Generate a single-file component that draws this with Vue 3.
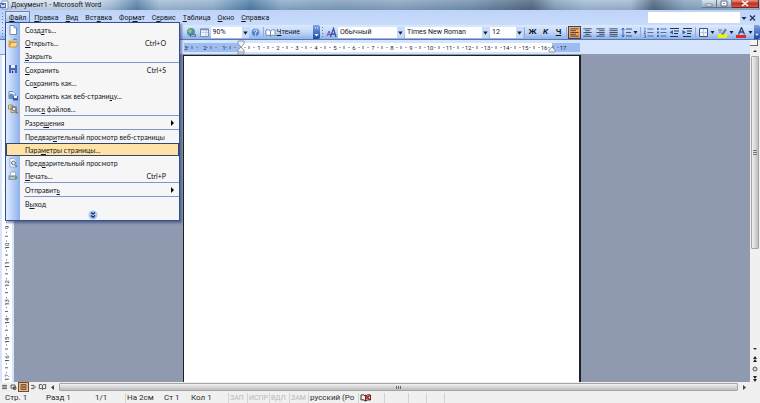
<script setup>
import { ref } from 'vue'

const menus = [
  ['', 'Ф', 'айл'], ['', 'П', 'равка'], ['', 'В', 'ид'], ['Вст', 'а', 'вка'], ['Фор', 'м', 'ат'],
  ['С', 'е', 'рвис'], ['', 'Т', 'аблица'], ['', 'О', 'кно'], ['', 'С', 'правка'],
]
const entries = [
  { t: ['Созд', 'а', 'ть...'], icon: 'new' },
  { t: ['', 'О', 'ткрыть...'], icon: 'open', key: 'Ctrl+O' },
  { t: ['', 'З', 'акрыть'] },
  { t: ['', 'С', 'охранить'], icon: 'save', key: 'Ctrl+S', line: true },
  { t: ['Со', 'х', 'ранить как...'] },
  { t: ['Сохранить как веб-страни', 'ц', 'у...'], icon: 'web' },
  { t: ['Поис', 'к', ' файлов...'], icon: 'find' },
  { t: ['Разре', 'ш', 'ения'], sub: true, line: true },
  { t: ['Предвар', 'и', 'тельный просмотр веб-страницы'], line: true },
  { t: ['Пара', 'м', 'етры страницы...'], active: true },
  { t: ['Пред', 'в', 'арительный просмотр'], icon: 'preview' },
  { t: ['', 'П', 'ечать...'], icon: 'print', key: 'Ctrl+P' },
  { t: ['Отправит', 'ь', ''], sub: true, line: true },
  { t: ['В', 'ы', 'ход'], line: true },
]
const aligns = [
  { name: 'По левому краю', d: 'M1 2h9M1 4h6M1 6h9M1 8h6M1 10h9' },
  { name: 'По центру', d: 'M1 2h9M3 4h5M1 6h9M3 8h5M1 10h9' },
  { name: 'По правому краю', d: 'M1 2h9M4 4h6M1 6h9M4 8h6M1 10h9' },
  { name: 'По ширине', d: 'M1 2h9M1 4h9M1 6h9M1 8h9M1 10h9' },
]
const views = [
  { name: 'Обычный', d: 'M2 3h6M2 5h6M2 7h6' },
  { name: 'Веб-документ', d: 'M2 2.500h5v4h-5zM5 5h3v3h-3z' },
  { name: 'Разметка страницы', d: 'M2 2h6v6h-6zM3 4h4M3 6h4', on: true },
  { name: 'Структура', d: 'M2 3h4M4 5h4M2 7h4' },
  { name: 'Чтение', d: 'M1 2h3l1 1 1-1h3v5h-3l-1 1-1-1h-3zM5 3v5' },
]
const hMarks = Array.from({ length: 21 }, (_, i) => i - 3)
const vMarks = Array.from({ length: 18 }, (_, i) => i)
const vAt = (n) => 3 + (n * 94) / 5
const zoom = ref('90%')
const style = ref('Обычный')
const font = ref('Times New Roman')
const size = ref('12')
const modes = ['ЗАП', 'ИСПР', 'ВДЛ', 'ЗАМ']
</script>

<template>
  <div class="window">
    <header class="title">
      <svg class="logo" viewBox="0 0 9 10"><path d="M2 1h6v8h-6z" fill="#fff" stroke="#7d94c4" /><path d="M0 3h6v5h-6z" fill="#4a6dbb" /><path d="M1 4l1 3 1-2 1 2 1-3" fill="none" stroke="#fff" stroke-width=".8" /></svg>
      <h1>Документ1 - Microsoft Word</h1>
      <div class="controls">
        <button aria-label="Свернуть"><svg viewBox="0 0 14 8"><path d="M4 4h6v2h-6z" fill="#fff" stroke="#5d6d82" stroke-width=".7" /></svg></button>
        <button aria-label="Развернуть"><svg viewBox="0 0 14 8"><path d="M4 1h6v5h-6z" fill="#fff" stroke="#5d6d82" /><path d="M6 3h2v1h-2z" fill="#7d8da5" /></svg></button>
        <button class="close" aria-label="Закрыть"><svg viewBox="0 0 14 8"><path d="M4 1l6 5M10 1l-6 5" stroke="#fff" stroke-width="1.600" /></svg></button>
      </div>
    </header>

    <nav class="menubar">
      <i class="grip"></i>
      <button v-for="(m, i) in menus" :key="i" :class="{ open: i === 0 }">{{ m[0] }}<u>{{ m[1] }}</u>{{ m[2] }}</button>
      <input class="question" aria-label="Введите вопрос" />
      <svg class="drop" viewBox="0 0 5 10"><path d="M0 4h5l-2.500 3z" fill="#1c2f5a" /></svg>
      <button class="shut" aria-label="Закрыть документ"><svg viewBox="0 0 8 8"><path d="M1.500 1.500l5 5M6.500 1.500l-5 5" stroke="#26365c" stroke-width="1.400" /></svg></button>

      <div class="popup" role="menu">
        <button v-for="(e, i) in entries" :key="i" role="menuitem" class="entry" :class="{ line: e.line, active: e.active }">
          <span class="pic">
            <svg v-if="e.icon" viewBox="0 0 10 10">
              <g v-if="e.icon === 'new'"><path d="M2 .5h4l2.500 2.500v6.500h-6.500z" fill="#fff" stroke="#7188ae" /><path d="M6 .5v2.500h2.500" fill="none" stroke="#7188ae" stroke-width=".8" /></g>
              <g v-if="e.icon === 'open'"><path d="M.5 9v-6.500h3l1 1h4v5.500z" fill="#e2a43a" /><path d="M1 9l2-4.500h7l-2 4.500z" fill="#ffd878" stroke="#b47b20" stroke-width=".6" /><path d="M5 2q2-2 4 0" fill="none" stroke="#5d719c" /></g>
              <g v-if="e.icon === 'save'"><path d="M1 1h8v8h-8z" fill="#4a63b0" /><path d="M3 1h4v3h-4z" fill="#e5ebf8" /><path d="M3 6h4v3h-4z" fill="#aab8df" /><path d="M4 7h1v2h-1z" fill="#26376f" /></g>
              <g v-if="e.icon === 'web'"><path d="M1 .5h4l2 2v5h-6z" fill="#fff" stroke="#7188ae" /><circle cx="3.500" cy="5" r="2.500" fill="#5894c8" /><path d="M5 5h5v4.500h-5z" fill="#3e57a5" /><path d="M6 5h3v2h-3z" fill="#fff" /></g>
              <g v-if="e.icon === 'find'"><path d="M.5 1h4v4h-4zM3 2.500h5.500v6h-5.500z" fill="#f3d68d" stroke="#8a7550" stroke-width=".7" /><circle cx="6" cy="5" r="2" fill="#dcebff" stroke="#58688e" /><path d="M7.500 7l2 2.500" stroke="#a3672a" stroke-width="1.300" /></g>
              <g v-if="e.icon === 'preview'"><path d="M2 .5h4l2 2v6.500h-6z" fill="#fff" stroke="#8ba0c2" stroke-width=".8" /><circle cx="5.500" cy="5" r="2" fill="#c5e2ee" stroke="#617e99" /><path d="M7 7l2 2" stroke="#617e99" stroke-width="1.300" /></g>
              <g v-if="e.icon === 'print'"><path d="M3 1h5l-1 4h-5z" fill="#fff" stroke="#7a8797" stroke-width=".6" /><path d="M.5 4.500h9v3l-2 1.500h-7z" fill="#8797a7" /><path d="M2 7h5" stroke="#e9eef3" /><path d="M7 6h2v2h-2z" fill="#55a055" /></g>
            </svg>
          </span>
          <span class="label">{{ e.t[0] }}<u>{{ e.t[1] }}</u>{{ e.t[2] }}</span>
          <kbd v-if="e.key">{{ e.key }}</kbd>
          <svg v-if="e.sub" class="more" viewBox="0 0 3 6"><path d="M0 0l3 3-3 3z" fill="#000" /></svg>
        </button>
        <button class="expand" aria-label="Развернуть меню"><svg viewBox="0 0 10 10"><circle cx="5" cy="5" r="4.500" fill="#a9c6f3" /><path d="M3 2.500l2 1.500 2-1.500M3 5.500l2 1.800 2-1.800" fill="none" stroke="#132a63" stroke-width="1.200" /></svg></button>
      </div>
    </nav>

    <div class="toolbar">
      <i class="grip"></i>
      <div class="std">
        <button class="tool" aria-label="Гиперссылка"><svg viewBox="0 0 11 11"><circle cx="5" cy="5" r="4" fill="#4b95a0" /><path d="M3 2l3 1-1 3-3-1z" fill="#8fcf7b" /><path d="M4 8.500h6" stroke="#46536c" stroke-width="2" /><path d="M5 8.500h4" stroke="#d8e0ee" stroke-width=".7" /></svg></button>
        <button class="tool" aria-label="Таблицы и границы"><svg viewBox="0 0 11 11"><path d="M1.500 2h8v7.500h-8z" fill="#eaf2fd" stroke="#7990b8" /><path d="M1 2.500h9" stroke="#7990b8" stroke-width="1.500" /><path d="M7 3v6M2 5.500h7" stroke="#a6b9d8" stroke-width=".6" /></svg></button>
        <span class="combo zoom"><select v-model="zoom" aria-label="Масштаб"><option>90%</option></select><svg viewBox="0 0 5 10"><path d="M0 4h4l-2 3z" fill="#14203f" /></svg></span>
        <button class="tool" aria-label="Справка"><svg viewBox="0 0 11 11"><circle cx="5.500" cy="5.500" r="4" fill="#4e7fce" stroke="#b5cdf2" stroke-width=".7" /><path d="M4 4.500q0-1.500 1.500-1.500t1.500 1.200q0 1-1.500 1.500v.8M5.500 7.500v1" fill="none" stroke="#fff" /></svg></button>
        <i class="sep"></i>
        <button class="read"><svg viewBox="0 0 11 11"><path d="M1 3q2.500-1 4.500 1 2-2 4.500-1v5.500q-2.500-1-4.500.5-2-1.500-4.500-.5z" fill="#fff" stroke="#65799f" stroke-width=".8" /><path d="M5.500 4v5" stroke="#65799f" /></svg><span><u>Ч</u>тение</span></button>
      </div>
      <button class="tail" aria-label="Параметры панели"><svg viewBox="0 0 7 14"><path d="M2 3h1M4 3h1" stroke="#fff" /><path d="M1.500 9h4l-2 2.500z" fill="#fff" /></svg></button>
      <i class="grip"></i>
      <button class="tool" aria-label="Стили"><svg viewBox="0 0 11 11"><path d="M1 9l2-5 2 5M2 7.500h2" fill="none" stroke="#8a4c9e" /><path d="M4.500 10l3-8.500 2.500 8.500M5.500 7h4" fill="none" stroke="#3656ad" stroke-width="1.300" /></svg></button>
      <span class="combo style"><select v-model="style" aria-label="Стиль"><option>Обычный</option></select><svg viewBox="0 0 5 10"><path d="M0 4h4l-2 3z" fill="#14203f" /></svg></span>
      <span class="combo font"><select v-model="font" aria-label="Шрифт"><option>Times New Roman</option></select><svg viewBox="0 0 5 10"><path d="M0 4h4l-2 3z" fill="#14203f" /></svg></span>
      <span class="combo size"><select v-model="size" aria-label="Размер"><option>12</option></select><svg viewBox="0 0 5 10"><path d="M0 4h4l-2 3z" fill="#14203f" /></svg></span>
      <i class="sep"></i>
      <button class="tool letter"><b>Ж</b></button>
      <button class="tool letter"><em>К</em></button>
      <button class="tool letter"><u>Ч</u></button>
      <i class="sep"></i>
      <button v-for="(a, i) in aligns" :key="a.name" class="tool" :class="{ on: i === 0 }" :aria-label="a.name"><svg viewBox="0 0 11 12"><path :d="a.d" fill="none" stroke="#27344f" stroke-width=".9" /></svg></button>
      <button class="tool" aria-label="Междустрочный интервал"><svg viewBox="0 0 11 11"><path d="M5 2h6M5 5.500h5M5 9h6" stroke="#41557f" /><path d="M2 1v9M.5 3l1.500-2 1.500 2M.5 8l1.500 2 1.500-2" fill="none" stroke="#3569b5" /></svg></button>
      <svg class="drop" viewBox="0 0 5 10"><path d="M0 4h4l-2 3z" fill="#14203f" /></svg>
      <i class="sep"></i>
      <button class="tool" aria-label="Нумерация"><svg viewBox="0 0 11 11"><path d="M4.500 2h6M4.500 5.500h6M4.500 9h6" stroke="#566a94" /><path d="M2 .5v3M1 4.500h1.500l-1.500 2h2M1 8h1.500v2.500h-1.500" fill="none" stroke="#3e69b4" stroke-width=".8" /></svg></button>
      <button class="tool" aria-label="Маркеры"><svg viewBox="0 0 11 11"><path d="M4.500 2h6M4.500 5.500h6M4.500 9h6" stroke="#566a94" /><path d="M1 1h2v2h-2zM1 4.500h2v2h-2zM1 8h2v2h-2z" fill="#3e69b4" /></svg></button>
      <button class="tool" aria-label="Уменьшить отступ"><svg viewBox="0 0 11 11"><path d="M1 1.500h9M5 4h5M5 6.500h4M1 9.500h8" stroke="#27344f" stroke-width="1.200" /><path d="M4 3v4.500l-3.500-2.200z" fill="#2f62b8" /></svg></button>
      <button class="tool" aria-label="Увеличить отступ"><svg viewBox="0 0 11 11"><path d="M1 1.500h9M5 4h5M5 6.500h4M1 9.500h8" stroke="#27344f" stroke-width="1.200" /><path d="M.5 3v4.500l3.500-2.200z" fill="#2f62b8" /></svg></button>
      <i class="sep"></i>
      <button class="tool" aria-label="Границы"><svg viewBox="0 0 11 11"><path d="M1.500 1.500h8v8h-8z" fill="#eef4fd" stroke="#41516f" /><path d="M5.500 2v7M2 5.500h7" stroke="#a5b5d0" stroke-width=".7" /></svg></button>
      <svg class="drop" viewBox="0 0 5 10"><path d="M0 4h4l-2 3z" fill="#14203f" /></svg>
      <button class="tool" aria-label="Выделение цветом"><svg viewBox="0 0 11 11"><path d="M1 7h9v4h-9z" fill="#eef01c" /><path d="M4 7l4-5.500 2 1.500-4 5z" fill="#72829a" /><path d="M1 3h4M2 5h2" stroke="#5b6d8a" /></svg></button>
      <svg class="drop" viewBox="0 0 5 10"><path d="M0 4h4l-2 3z" fill="#14203f" /></svg>
      <button class="tool" aria-label="Цвет шрифта"><svg viewBox="0 0 11 11"><path d="M2.500 7.500l3-7 3 7M3.500 5h4" fill="none" stroke="#2c4277" stroke-width="1.300" /><path d="M0 8h10v3h-10z" fill="#e0272c" /></svg></button>
      <svg class="drop" viewBox="0 0 5 10"><path d="M0 4h4l-2 3z" fill="#14203f" /></svg>
      <button class="tail last" aria-label="Параметры форматирования"><svg viewBox="0 0 7 14"><path d="M1.500 9h4l-2 2.500z" fill="#fff" /></svg></button>
    </div>

    <div class="body">
      <div class="editor">
        <div class="hruler">
          <svg width="397" height="15">
            <path d="M0 3h57v9h-57zM368 3h28v9h-28z" fill="#9dbcf0" />
            <path d="M57 3h311v9h-311z" fill="#fff" />
            <g v-for="n in hMarks" :key="n">
              <text v-if="n && n < 18" :x="56 + n * 19 + (n < 0 ? 3 : 0)" y="10" class="num">{{ Math.abs(n) }}</text>
              <path v-if="n < 17" :d="`M${61 + n * 19} 7v1M${65 + n * 19} 6v3M${70 + n * 19} 7v1`" stroke="#53637f" />
            </g>
            <path d="M54 1h6v3l-3 3-3-3zM57 7l3 3v4h-6v-4zM54 12h6M365 12v-2l3-3 3 3v2z" fill="#edf1f7" stroke="#7d8797" stroke-width=".8" />
          </svg>
        </div>
        <div class="desk">
          <div class="vruler">
            <svg width="14" height="327">
              <path d="M2 0h10v327h-10z" fill="#fff" />
              <g v-for="n in vMarks" :key="n">
                <text v-if="n" class="num" :transform="`translate(9 ${vAt(n)}) rotate(-90)`">{{ n }}</text>
                <path :d="`M6 ${vAt(n) + 5}h1M5 ${vAt(n) + 9}h3M6 ${vAt(n) + 14}h1`" stroke="#53637f" />
              </g>
            </svg>
          </div>
          <div class="canvas"><main class="page"></main></div>
        </div>
        <div class="hscroll">
          <button v-for="v in views" :key="v.name" class="view" :class="{ on: v.on }" :aria-label="v.name"><svg viewBox="0 0 10 10"><path :d="v.d" fill="none" stroke="#333" /></svg></button>
          <svg class="arrow" viewBox="0 0 10 9"><path d="M6 2v5l-3-2.500z" fill="#444" /></svg>
          <div class="hthumb"><i></i></div>
          <svg class="arrow" viewBox="0 0 10 9"><path d="M4 2v5l3-2.500z" fill="#444" /></svg>
        </div>
      </div>
      <aside class="vscroll">
        <i class="split"></i>
        <svg viewBox="0 0 10 10"><path d="M3 6h4l-2-2z" fill="#333" /></svg>
        <div class="vtrack"><div class="vthumb"><i></i></div></div>
        <svg viewBox="0 0 10 10"><path d="M3 4h4l-2 2z" fill="#333" /></svg>
        <svg viewBox="0 0 10 10"><path d="M3 5l2-3 2 3zM3 8l2-3 2 3z" fill="#222" /></svg>
        <svg viewBox="0 0 10 10"><circle cx="5" cy="5" r="2" fill="#ddd" stroke="#555" /></svg>
        <svg viewBox="0 0 10 10"><path d="M3 2l2 3 2-3zM3 5l2 3 2-3z" fill="#222" /></svg>
        <i class="corner"></i>
      </aside>
    </div>

    <footer class="status">
      <span>Стр. 1</span><span>Разд 1</span><span>1/1</span><span class="edge">На 2см</span><span>Ст 1</span><span>Кол 1</span>
      <span v-for="m in modes" :key="m" class="off edge">{{ m }}</span>
      <span class="edge">русский (Ро</span>
      <span class="edge book"><svg viewBox="0 0 12 9"><path d="M1 2q2-1 4.500 1 2.500-2 5-1v5q-2.500-1-5 1-2.500-2-4.500-1z" fill="#f4f0ee" stroke="#333" /><path d="M5.500 3v5" stroke="#333" /><path d="M5 2l5 5M10 2l-5 5" stroke="#b02020" stroke-width="1.400" /></svg></span>
      <span class="edge"></span><span class="edge"></span><span class="edge"></span><span class="edge"></span>
    </footer>
  </div>
</template>

<style>
body { overflow: hidden; }
</style>

<style scoped>
* { box-sizing: border-box; }
.window { display: flex; flex-direction: column; height: 100vh; font: 7px/10px Roboto, "Noto Sans", sans-serif; color: #10151f; background: #c4d8f8; white-space: nowrap; }
button { display: flex; align-items: center; padding: 0; border: 0; background: none; font: inherit; color: inherit; }
svg { display: block; }
u { text-underline-offset: 1px; text-decoration-thickness: 1px; }

.title { display: flex; align-items: center; height: 10px; padding: 0 1px 0 0; background: linear-gradient(rgba(255, 255, 255, .15), rgba(40, 70, 110, .18)), linear-gradient(90deg, #dbe6f2 0, #d3e1f0 12%, #a5bed8 15%, #5f86ab 18%, #a8c2da 21%, #9ab6d0 28%, #4f7ea8 33%, #90afcb 37%, #84a1bd 45%, #8ea9c3 52%, #7693af 62%, #52677f 70%, #8ba5be 73%, #a9c0d6 77%, #a5bcd2 83%, #53697f 86%, #8ba7c1 90%, #a5bdd4 100%); }
.logo { width: 9px; height: 10px; }
h1 { flex: 1; margin: 0 0 0 2px; font: inherit; }
.controls { display: flex; align-self: flex-start; height: 8px; }
.controls button { justify-content: center; width: 15px; background: linear-gradient(#dce5ee, #98abc0); border: 1px solid #62758d; border-top: 0; border-left-width: 0; }
.controls .close { width: 27px; background: linear-gradient(#e39a8d, #c2311d 50%, #d9563c); border-color: #6e2a24; }
.controls svg { width: 14px; height: 8px; }

.menubar { position: relative; display: flex; align-items: center; height: 15px; padding-right: 3px; background: linear-gradient(#bdd3f8, #c9dcfb); }
.menubar > button { height: 13px; padding: 0 3px 0 4px; }
.menubar > .open { border: 1px solid #6884bb; border-bottom: 0; padding: 0 3px; background: linear-gradient(#dce9fc, #9fbdf0); }
.grip { flex: none; width: 3px; height: 10px; margin: 0 1px; background: repeating-linear-gradient(#5d80bd 0 1px, transparent 1px 3px) 1px 0 / 1px 100% no-repeat; }
.question { width: 92px; height: 11px; margin-left: auto; padding: 0 2px; border: 0; background: #fff; font: inherit; }
.drop { flex: none; width: 6px; height: 10px; }
.menubar .drop { margin: 0 1px; }
.menubar > .shut { padding: 0; }
.shut svg { width: 9px; height: 8px; }

.popup { position: absolute; z-index: 5; top: 12px; left: 5px; width: 175px; border: 1px solid #304f9b; background: #f6f6f6; box-shadow: 2px 2px 2px rgba(45, 60, 100, .55); font: 7px/10px Lato, "Noto Sans", sans-serif; }
.entry { position: relative; width: 100%; height: 13px; }
.entry.line { height: 14px; padding-top: 1px; background: linear-gradient(#7a98d0, #7a98d0) 18px 0 / 100% 1px no-repeat; }
.pic { flex: none; display: flex; align-items: center; align-self: stretch; width: 14px; padding-left: 2px; margin-right: 5px; background: linear-gradient(90deg, #dfecfe, #8db0ea); }
.line .pic { margin-top: -1px; }
.pic svg { width: 10px; height: 10px; }
.label { flex: 1; text-align: left; }
.entry kbd { margin-right: 13px; font: inherit; }
.more { width: 3px; height: 6px; margin-right: 5px; }
.active { background: #ffe3a6; box-shadow: inset 0 0 0 1px #34446f; }
.active .pic { background: none; }
.expand { width: 100%; height: 10px; justify-content: center; background: linear-gradient(90deg, #dfecfe, #8db0ea) 0 0 / 14px 100% no-repeat; }
.expand svg { width: 10px; height: 10px; }

.toolbar { display: flex; align-items: center; height: 15px; background: linear-gradient(#dbe9fe, #c3d8f9 50%, #8fb2e8); border-bottom: 1px solid #5878b0; }
.std { display: flex; align-items: center; justify-content: flex-end; width: 308px; padding-right: 13px; }
.tool { flex: none; justify-content: center; width: 13px; height: 13px; }
.tool svg { width: 11px; height: 11px; }
.tool.on { background: linear-gradient(#fbb468, #f59545); border: 1px solid #33436d; }
.letter { font-size: 8px; }
.letter b, .letter em, .letter u { font-weight: 700; }
.read { gap: 1px; }
.read svg { width: 11px; height: 11px; }
.sep { flex: none; width: 1px; height: 10px; margin: 0 1px; background: #8fabd9; }
.tail { flex: none; width: 7px; height: 14px; background: linear-gradient(#7ea5e8, #1a479f); border-radius: 0 2px 2px 0; }
.tail svg { width: 7px; height: 14px; }
.last { width: 6px; margin-left: auto; }
.combo { display: flex; align-items: center; height: 11px; background: #fff; }
.combo select { flex: 1; min-width: 0; height: 11px; padding: 0 0 0 2px; border: 0; appearance: none; background: #fff; color: inherit; font: inherit; }
.combo svg { width: 7px; height: 11px; padding-left: 1px; background: #c7dbf9; }
.zoom { width: 38px; }
.style { width: 66px; }
.font { width: 84px; margin-left: 1px; }
.size { width: 33px; margin-left: 1px; }

.body { display: flex; flex: 1; min-height: 0; }
.editor { display: flex; flex: 1; flex-direction: column; min-width: 0; }
.hruler { display: flex; flex: none; justify-content: center; height: 15px; padding-left: 14px; background: #d7e5fc; border-bottom: 1px solid #8e9cb8; }
.num { font-size: 6px; fill: #1d2a44; text-anchor: middle; }
.desk { display: flex; flex: 1; min-height: 0; }
.vruler { flex: none; width: 14px; overflow: hidden; background: #d7e5fc; }
.canvas { display: flex; flex: 1; justify-content: center; background: #8f99b0; }
.page { width: 398px; background: #fff; border: solid #1c202b; border-width: 1px 2px 0 1px; }
.hscroll { display: flex; align-items: center; flex: none; height: 10px; background: #efefef; }
.view { flex: none; width: 9px; height: 10px; }
.view.on { width: 11px; background: #f6b872; border: 1px solid #6a4a3a; }
.view svg { width: 100%; height: 8px; }
.arrow { width: 12px; height: 9px; }
.hthumb { flex: 1; display: flex; justify-content: center; align-items: center; height: 8px; border: 1px solid #a5a5a5; border-radius: 1px; background: linear-gradient(#f1f1f1, #bdbdbd); }
.hthumb i { width: 5px; height: 3px; background: repeating-linear-gradient(90deg, #666 0 1px, transparent 1px 2px); }
.vscroll { display: flex; flex-direction: column; width: 10px; background: #f0f0f0; }
.vscroll svg { width: 10px; height: 10px; flex: none; }
.split { flex: none; height: 6px; margin-right: 2px; background: #f4f4f4; border: solid #666; border-width: 0 1px 1px 0; }
.vtrack { flex: 1; min-height: 0; }
.vthumb { display: flex; align-items: center; justify-content: center; width: 8px; margin-left: 1px; height: 67%; border: 1px solid #a5a5a5; border-radius: 1px; background: linear-gradient(90deg, #f1f1f1, #bdbdbd); }
.vthumb i { width: 4px; height: 5px; background: repeating-linear-gradient(#777 0 1px, transparent 1px 2px); }
.corner { flex: none; height: 8px; }

.status { display: grid; flex: none; grid-template-columns: 41px 49px 30px 39px 27px 37px 19px 22px 20px 19px 50px 26px 24px 18px 18px 1fr; height: 11px; padding-left: 5px; background: #f0f0f0; color: #2d2d2d; font-size: 8px; }
.status span { height: 10px; margin-top: 1px; }
.status .edge { border-left: 1px solid #d3d3d3; padding-left: 1px; }
.status .off { color: #b9b9b9; font-size: 7px; }
.book svg { width: 12px; height: 9px; }
</style>
